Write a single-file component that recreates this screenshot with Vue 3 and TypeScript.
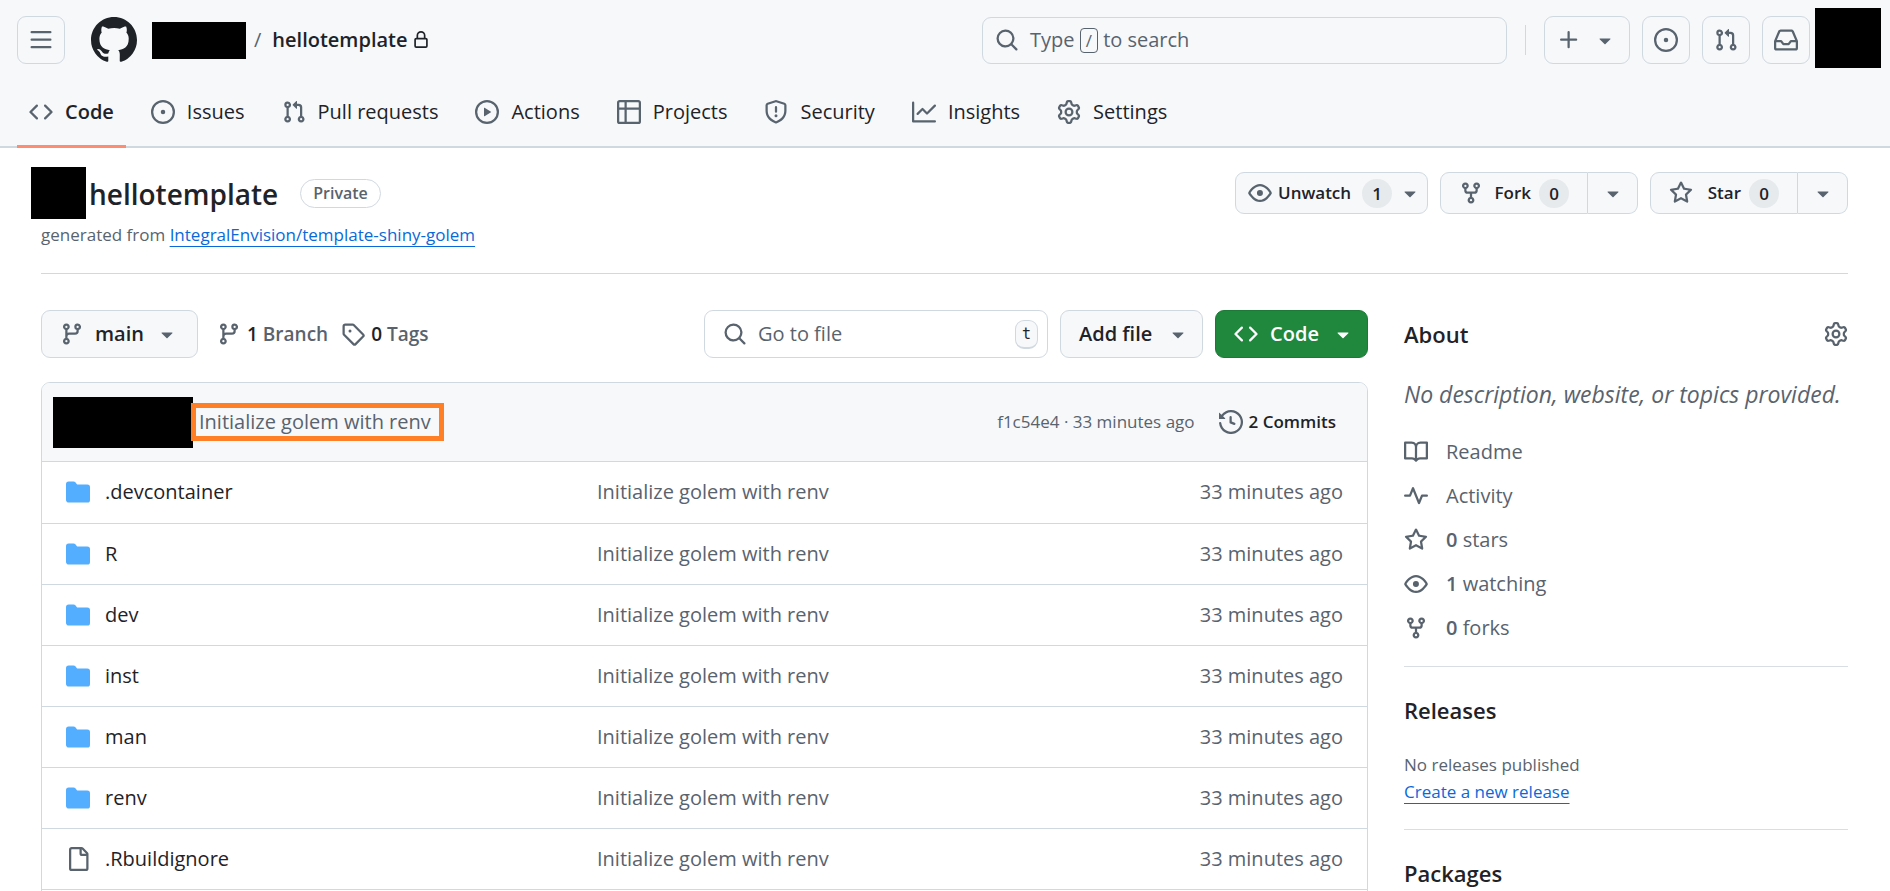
<script setup lang="ts">
import { ref } from 'vue'

const icons = {
  bars: 'M1 2.75A.75.75 0 0 1 1.75 2h12.5a.75.75 0 0 1 0 1.5H1.75A.75.75 0 0 1 1 2.75Zm0 5A.75.75 0 0 1 1.75 7h12.5a.75.75 0 0 1 0 1.5H1.75A.75.75 0 0 1 1 7.75ZM1.75 12h12.5a.75.75 0 0 1 0 1.5H1.75a.75.75 0 0 1 0-1.5Z',
  mark: 'M8 0c4.42 0 8 3.58 8 8a8.013 8.013 0 0 1-5.45 7.59c-.4.08-.55-.17-.55-.38 0-.27.01-1.13.01-2.2 0-.75-.25-1.23-.54-1.48 1.78-.2 3.65-.88 3.65-3.95 0-.88-.31-1.59-.82-2.15.08-.2.36-1.02-.08-2.12 0 0-.67-.22-2.2.82-.64-.18-1.32-.27-2-.27-.68 0-1.36.09-2 .27-1.53-1.03-2.2-.82-2.2-.82-.44 1.1-.16 1.92-.08 2.12-.51.56-.82 1.28-.82 2.15 0 3.06 1.86 3.75 3.64 3.95-.23.2-.44.55-.51 1.07-.46.21-1.61.55-2.33-.66-.15-.24-.6-.83-1.23-.82-.67.01-.27.38.01.53.34.19.73.9.82 1.13.16.45.68 1.31 2.69.94 0 .67.01 1.3.01 1.49 0 .21-.15.45-.55.38A7.995 7.995 0 0 1 0 8c0-4.42 3.58-8 8-8Z',
  lock: 'M4 4a4 4 0 0 1 8 0v2h.25c.966 0 1.75.784 1.75 1.75v5.5A1.75 1.75 0 0 1 12.25 15h-8.5A1.75 1.75 0 0 1 2 13.25v-5.5C2 6.784 2.784 6 3.75 6H4Zm8.25 3.5h-8.5a.25.25 0 0 0-.25.25v5.5c0 .138.112.25.25.25h8.5a.25.25 0 0 0 .25-.25v-5.5a.25.25 0 0 0-.25-.25ZM10.5 6V4a2.5 2.5 0 1 0-5 0v2Z',
  search: 'M10.68 11.74a6 6 0 0 1-7.922-8.982 6 6 0 0 1 8.982 7.922l3.04 3.04a.749.749 0 0 1-.326 1.275.749.749 0 0 1-.734-.215ZM11.5 7a4.499 4.499 0 1 0-8.997 0A4.499 4.499 0 0 0 11.5 7Z',
  plus: 'M7.75 2a.75.75 0 0 1 .75.75V7h4.25a.75.75 0 0 1 0 1.5H8.5v4.25a.75.75 0 0 1-1.5 0V8.5H2.75a.75.75 0 0 1 0-1.5H7V2.75A.75.75 0 0 1 7.75 2Z',
  caret: 'm4.427 7.427 3.396 3.396a.25.25 0 0 0 .354 0l3.396-3.396A.25.25 0 0 0 11.396 7H4.604a.25.25 0 0 0-.177.427Z',
  inbox: 'M2.8 2.06A1.75 1.75 0 0 1 4.41 1h7.18c.7 0 1.333.417 1.61 1.06l2.74 6.395c.04.093.06.194.06.295v4.5A1.75 1.75 0 0 1 14.25 15H1.75A1.75 1.75 0 0 1 0 13.25v-4.5c0-.101.02-.202.06-.295Zm1.61.44a.25.25 0 0 0-.23.152L1.887 8H4.75a.75.75 0 0 1 .6.3L6.625 10h2.75l1.275-1.7a.75.75 0 0 1 .6-.3h2.863L11.82 2.652a.25.25 0 0 0-.23-.152Zm10.09 7h-2.875l-1.275 1.7a.75.75 0 0 1-.6.3h-3.5a.75.75 0 0 1-.6-.3L4.375 9.5H1.5v3.75c0 .138.112.25.25.25h12.5a.25.25 0 0 0 .25-.25Z',
  code: 'm11.28 3.22 4.25 4.25a.75.75 0 0 1 0 1.06l-4.25 4.25a.749.749 0 0 1-1.275-.326.749.749 0 0 1 .215-.734L13.94 8l-3.72-3.72a.749.749 0 0 1 .326-1.275.749.749 0 0 1 .734.215Zm-6.56 0a.751.751 0 0 1 1.042.018.751.751 0 0 1 .018 1.042L2.06 8l3.72 3.72a.749.749 0 0 1-.326 1.275.749.749 0 0 1-.734-.215L.47 8.53a.75.75 0 0 1 0-1.06Z',
  issue: 'M8 9.5a1.5 1.5 0 1 0 0-3 1.5 1.5 0 0 0 0 3ZM8 0a8 8 0 1 1 0 16A8 8 0 0 1 8 0ZM1.5 8a6.5 6.5 0 1 0 13 0 6.5 6.5 0 0 0-13 0Z',
  pull: 'M1.5 3.25a2.25 2.25 0 1 1 3 2.122v5.256a2.251 2.251 0 1 1-1.5 0V5.372A2.25 2.25 0 0 1 1.5 3.25Zm5.677-.177L9.573.677A.25.25 0 0 1 10 .854V2.5h1A2.5 2.5 0 0 1 13.5 5v5.628a2.251 2.251 0 1 1-1.5 0V5a1 1 0 0 0-1-1h-1v1.646a.25.25 0 0 1-.427.177L7.177 3.427a.25.25 0 0 1 0-.354ZM3.75 2.5a.75.75 0 1 0 0 1.5.75.75 0 0 0 0-1.5Zm0 9.5a.75.75 0 1 0 0 1.5.75.75 0 0 0 0-1.5Zm8.25.75a.75.75 0 1 0 1.5 0 .75.75 0 0 0-1.5 0Z',
  play: 'M8 0a8 8 0 1 1 0 16A8 8 0 0 1 8 0ZM1.5 8a6.5 6.5 0 1 0 13 0 6.5 6.5 0 0 0-13 0Zm4.879-2.773 4.264 2.559a.25.25 0 0 1 0 .428l-4.264 2.559A.25.25 0 0 1 6 10.559V5.442a.25.25 0 0 1 .379-.215Z',
  table: 'M0 1.75C0 .784.784 0 1.75 0h12.5C15.216 0 16 .784 16 1.75v12.5A1.75 1.75 0 0 1 14.25 16H1.75A1.75 1.75 0 0 1 0 14.25ZM6.5 6.5v8h7.75a.25.25 0 0 0 .25-.25V6.5Zm8-1.5V1.75a.25.25 0 0 0-.25-.25H6.5V5Zm-13 1.5v7.75c0 .138.112.25.25.25H5v-8ZM5 5V1.5H1.75a.25.25 0 0 0-.25.25V5Z',
  shield: 'M7.467.133a1.748 1.748 0 0 1 1.066 0l5.25 1.68A1.75 1.75 0 0 1 15 3.48V7c0 1.566-.32 3.182-1.303 4.682-.983 1.498-2.585 2.813-5.032 3.855a1.697 1.697 0 0 1-1.33 0c-2.447-1.042-4.049-2.357-5.032-3.855C1.32 10.182 1 8.566 1 7V3.48a1.75 1.75 0 0 1 1.217-1.667Zm.61 1.429a.25.25 0 0 0-.153 0l-5.25 1.68a.25.25 0 0 0-.174.238V7c0 1.358.275 2.666 1.057 3.86.784 1.194 2.121 2.34 4.366 3.297a.196.196 0 0 0 .154 0c2.245-.956 3.582-2.104 4.366-3.298C13.225 9.666 13.5 8.36 13.5 7V3.48a.251.251 0 0 0-.174-.237l-5.25-1.68ZM8.75 4.75v3a.75.75 0 0 1-1.5 0v-3a.75.75 0 0 1 1.5 0ZM9 10.5a1 1 0 1 1-2 0 1 1 0 0 1 2 0Z',
  graph: 'M1.5 1.75V13.5h13.75a.75.75 0 0 1 0 1.5H.75a.75.75 0 0 1-.75-.75V1.75a.75.75 0 0 1 1.5 0Zm14.28 2.53-5.25 5.25a.75.75 0 0 1-1.06 0L7 7.06 4.28 9.78a.751.751 0 0 1-1.042-.018.751.751 0 0 1-.018-1.042l3.25-3.25a.75.75 0 0 1 1.06 0L10 7.94l4.72-4.72a.751.751 0 0 1 1.042.018.751.751 0 0 1 .018 1.042Z',
  gear: 'M8 0a8.2 8.2 0 0 1 .701.031C9.444.095 9.99.645 10.16 1.29l.288 1.107c.018.066.079.158.212.224.231.114.454.243.668.386.123.082.233.09.299.071l1.103-.303c.644-.176 1.392.021 1.82.63.27.385.506.792.704 1.218.315.675.111 1.422-.364 1.891l-.814.806c-.049.048-.098.147-.088.294.016.257.016.515 0 .772-.01.147.038.246.088.294l.814.806c.475.469.679 1.216.364 1.891a7.977 7.977 0 0 1-.704 1.217c-.428.61-1.176.807-1.82.63l-1.102-.302c-.067-.019-.177-.011-.3.071a5.909 5.909 0 0 1-.668.386c-.133.066-.194.158-.211.224l-.29 1.106c-.168.646-.715 1.196-1.458 1.26a8.006 8.006 0 0 1-1.402 0c-.743-.064-1.289-.614-1.458-1.26l-.289-1.106c-.018-.066-.079-.158-.212-.224a5.738 5.738 0 0 1-.668-.386c-.123-.082-.233-.09-.299-.071l-1.103.303c-.644.176-1.392-.021-1.82-.63a8.12 8.12 0 0 1-.704-1.218c-.315-.675-.111-1.422.363-1.891l.815-.806c.05-.048.098-.147.088-.294a6.214 6.214 0 0 1 0-.772c.01-.147-.038-.246-.088-.294l-.815-.806C.635 6.045.431 5.298.746 4.623a7.92 7.92 0 0 1 .704-1.217c.428-.61 1.176-.807 1.82-.63l1.102.302c.067.019.177.011.3-.071.214-.143.437-.272.668-.386.133-.066.194-.158.211-.224l.29-1.106C6.009.645 6.556.095 7.299.03 7.53.01 7.764 0 8 0Zm-.571 1.525c-.036.003-.108.036-.137.146l-.289 1.105c-.147.561-.549.967-.998 1.189-.173.086-.34.183-.5.29-.417.278-.97.423-1.529.27l-1.103-.303c-.109-.03-.175.016-.195.045-.22.312-.412.644-.573.99-.014.031-.021.11.059.19l.815.806c.411.406.562.957.53 1.456a4.709 4.709 0 0 0 0 .582c.032.499-.119 1.05-.53 1.456l-.815.806c-.081.08-.073.159-.059.19.162.346.353.677.573.989.02.03.085.076.195.046l1.102-.303c.56-.153 1.113-.008 1.53.27.161.107.328.204.501.29.447.222.85.629.997 1.189l.289 1.105c.029.109.101.143.137.146a6.6 6.6 0 0 0 1.142 0c.036-.003.108-.036.137-.146l.289-1.105c.147-.561.549-.967.998-1.189.173-.086.34-.183.5-.29.417-.278.97-.423 1.529-.27l1.103.303c.109.029.175-.016.195-.045.22-.313.411-.644.573-.99.014-.031.021-.11-.059-.19l-.815-.806c-.411-.406-.562-.957-.53-1.456a4.709 4.709 0 0 0 0-.582c-.032-.499.119-1.05.53-1.456l.815-.806c.081-.08.073-.159.059-.19a6.464 6.464 0 0 0-.573-.989c-.02-.03-.085-.076-.195-.046l-1.102.303c-.56.153-1.113.008-1.53-.27a4.44 4.44 0 0 0-.501-.29c-.447-.222-.85-.629-.997-1.189l-.289-1.105c-.029-.11-.101-.143-.137-.146a6.6 6.6 0 0 0-1.142 0ZM11 8a3 3 0 1 1-6 0 3 3 0 0 1 6 0ZM9.5 8a1.5 1.5 0 1 0-3.001.001A1.5 1.5 0 0 0 9.5 8Z',
  eye: 'M8 2c1.981 0 3.671.992 4.933 2.078 1.27 1.091 2.187 2.345 2.637 3.023a1.62 1.62 0 0 1 0 1.798c-.45.678-1.367 1.932-2.637 3.023C11.67 13.008 9.981 14 8 14c-1.981 0-3.671-.992-4.933-2.078C1.797 10.83.88 9.576.43 8.898a1.62 1.62 0 0 1 0-1.798c.45-.677 1.367-1.931 2.637-3.022C4.33 2.992 6.019 2 8 2ZM1.679 7.932a.12.12 0 0 0 0 .136c.411.622 1.241 1.75 2.366 2.717C5.176 11.758 6.527 12.5 8 12.5c1.473 0 2.825-.742 3.955-1.715 1.124-.967 1.954-2.096 2.366-2.717a.12.12 0 0 0 0-.136c-.412-.621-1.242-1.75-2.366-2.717C10.824 4.242 9.473 3.5 8 3.5c-1.473 0-2.825.742-3.955 1.715-1.124.967-1.954 2.096-2.366 2.717ZM8 10a2 2 0 1 1-.001-3.999A2 2 0 0 1 8 10Z',
  fork: 'M5 5.372v.878c0 .414.336.75.75.75h4.5a.75.75 0 0 0 .75-.75v-.878a2.25 2.25 0 1 1 1.5 0v.878a2.25 2.25 0 0 1-2.25 2.25h-1.5v2.128a2.251 2.251 0 1 1-1.5 0V8.5h-1.5A2.25 2.25 0 0 1 3.5 6.25v-.878a2.25 2.25 0 1 1 1.5 0ZM5 3.25a.75.75 0 1 0-1.5 0 .75.75 0 0 0 1.5 0Zm6.75.75a.75.75 0 1 0 0-1.5.75.75 0 0 0 0 1.5Zm-3 8.75a.75.75 0 1 0-1.5 0 .75.75 0 0 0 1.5 0Z',
  star: 'M8 .25a.75.75 0 0 1 .673.418l1.882 3.815 4.21.612a.75.75 0 0 1 .416 1.279l-3.046 2.97.719 4.192a.751.751 0 0 1-1.088.791L8 12.347l-3.766 1.98a.75.75 0 0 1-1.088-.79l.72-4.194L.818 6.374a.75.75 0 0 1 .416-1.28l4.21-.611L7.327.668A.75.75 0 0 1 8 .25Zm0 2.445L6.615 5.5a.75.75 0 0 1-.564.41l-3.097.45 2.24 2.184a.75.75 0 0 1 .216.664l-.528 3.084 2.769-1.456a.75.75 0 0 1 .698 0l2.77 1.456-.53-3.084a.75.75 0 0 1 .216-.664l2.24-2.183-3.096-.45a.75.75 0 0 1-.564-.41L8 2.694Z',
  branch: 'M9.5 3.25a2.25 2.25 0 1 1 3 2.122V6A2.5 2.5 0 0 1 10 8.5H6a1 1 0 0 0-1 1v1.128a2.251 2.251 0 1 1-1.5 0V5.372a2.25 2.25 0 1 1 1.5 0v1.836A2.493 2.493 0 0 1 6 7h4a1 1 0 0 0 1-1v-.628A2.25 2.25 0 0 1 9.5 3.25Zm-6 0a.75.75 0 1 0 1.5 0 .75.75 0 0 0-1.5 0Zm8.25-.75a.75.75 0 1 0 0 1.5.75.75 0 0 0 0-1.5ZM4.25 12a.75.75 0 1 0 0 1.5.75.75 0 0 0 0-1.5Z',
  tag: 'M1 7.775V2.75C1 1.784 1.784 1 2.75 1h5.025c.464 0 .91.184 1.238.513l6.25 6.25a1.75 1.75 0 0 1 0 2.474l-5.026 5.026a1.75 1.75 0 0 1-2.474 0l-6.25-6.25A1.752 1.752 0 0 1 1 7.775Zm1.5 0c0 .066.026.13.073.177l6.25 6.25a.25.25 0 0 0 .354 0l5.025-5.025a.25.25 0 0 0 0-.354l-6.25-6.25a.25.25 0 0 0-.177-.073H2.75a.25.25 0 0 0-.25.25ZM6 5a1 1 0 1 1 0 2 1 1 0 0 1 0-2Z',
  history: 'm.427 1.927 1.215 1.215a8.002 8.002 0 1 1-1.6 5.685.75.75 0 1 1 1.493-.154 6.5 6.5 0 1 0 1.18-4.458l1.358 1.358A.25.25 0 0 1 3.896 6H.25A.25.25 0 0 1 0 5.75V2.104a.25.25 0 0 1 .427-.177ZM7.75 4a.75.75 0 0 1 .75.75v2.992l2.028.812a.75.75 0 0 1-.557 1.392l-2.5-1A.751.751 0 0 1 7 8.25v-3.5A.75.75 0 0 1 7.75 4Z',
  folder: 'M1.75 1A1.75 1.75 0 0 0 0 2.75v10.5C0 14.216.784 15 1.75 15h12.5A1.75 1.75 0 0 0 16 13.25v-8.5A1.75 1.75 0 0 0 14.25 3H7.5a.25.25 0 0 1-.2-.1l-.9-1.2C6.07 1.26 5.55 1 5 1H1.75Z',
  file: 'M2 1.75C2 .784 2.784 0 3.75 0h6.586c.464 0 .909.184 1.237.513l2.914 2.914c.329.328.513.773.513 1.237v9.586A1.75 1.75 0 0 1 13.25 16h-9.5A1.75 1.75 0 0 1 2 14.25Zm1.75-.25a.25.25 0 0 0-.25.25v12.5c0 .138.112.25.25.25h9.5a.25.25 0 0 0 .25-.25V6h-2.75A1.75 1.75 0 0 1 9 4.25V1.5Zm6.75.062V4.25c0 .138.112.25.25.25h2.688l-.011-.013-2.914-2.914-.013-.011Z',
  book: 'M0 1.75A.75.75 0 0 1 .75 1h4.253c1.227 0 2.317.59 3 1.501A3.743 3.743 0 0 1 11.006 1h4.245a.75.75 0 0 1 .75.75v10.5a.75.75 0 0 1-.75.75h-4.507a2.25 2.25 0 0 0-1.591.659l-.622.621a.75.75 0 0 1-1.06 0l-.622-.621A2.25 2.25 0 0 0 5.258 13H.75a.75.75 0 0 1-.75-.75Zm7.251 10.324.004-5.073-.002-2.253A2.25 2.25 0 0 0 5.003 2.5H1.5v9h3.757a3.75 3.75 0 0 1 1.994.574ZM8.755 4.75l-.004 7.322a3.752 3.752 0 0 1 1.992-.572H14.5v-9h-3.495a2.25 2.25 0 0 0-2.25 2.25Z',
  pulse: 'M6 2c.306 0 .582.187.696.471L10 10.731l1.304-3.26A.751.751 0 0 1 12 7h3.25a.75.75 0 0 1 0 1.5h-2.742l-1.812 4.528a.751.751 0 0 1-1.392 0L6 4.77 4.696 8.03A.75.75 0 0 1 4 8.5H.75a.75.75 0 0 1 0-1.5h2.742l1.812-4.529A.751.751 0 0 1 6 2Z',
}

type IconName = keyof typeof icons

const tabs: { label: string; icon: IconName }[] = [
  { label: 'Code', icon: 'code' },
  { label: 'Issues', icon: 'issue' },
  { label: 'Pull requests', icon: 'pull' },
  { label: 'Actions', icon: 'play' },
  { label: 'Projects', icon: 'table' },
  { label: 'Security', icon: 'shield' },
  { label: 'Insights', icon: 'graph' },
  { label: 'Settings', icon: 'gear' },
]

const shortcuts: { label: string; icon: IconName }[] = [
  { label: 'Issues', icon: 'issue' },
  { label: 'Pull requests', icon: 'pull' },
  { label: 'Notifications', icon: 'inbox' },
]

const files: { name: string; icon: IconName }[] = [
  { name: '.devcontainer', icon: 'folder' },
  { name: 'R', icon: 'folder' },
  { name: 'dev', icon: 'folder' },
  { name: 'inst', icon: 'folder' },
  { name: 'man', icon: 'folder' },
  { name: 'renv', icon: 'folder' },
  { name: '.Rbuildignore', icon: 'file' },
]

const facts: { icon: IconName; count?: number; label: string }[] = [
  { icon: 'book', label: 'Readme' },
  { icon: 'pulse', label: 'Activity' },
  { icon: 'star', count: 0, label: 'stars' },
  { icon: 'eye', count: 1, label: 'watching' },
  { icon: 'fork', count: 0, label: 'forks' },
]

const commitMessage = 'Initialize golem with renv'
const commitAge = '33 minutes ago'
const activeTab = ref('Code')
const fileQuery = ref('')
</script>

<template>
  <div class="page">
    <header class="header">
      <div class="topbar">
        <button class="square" type="button" aria-label="Open menu">
          <svg class="icon" viewBox="0 0 16 16"><path :d="icons.bars" /></svg>
        </button>
        <a class="logo" href="#" aria-label="Homepage">
          <svg class="mark" viewBox="0 0 16 16"><path :d="icons.mark" /></svg>
        </a>
        <div class="crumbs">
          <span class="redacted owner"></span>
          <span class="slash">/</span>
          <a class="repo" href="#">hellotemplate</a>
          <svg class="lock" viewBox="0 0 16 16"><path :d="icons.lock" /></svg>
        </div>
        <div class="tools">
          <button class="search" type="button">
            <svg class="icon" viewBox="0 0 16 16"><path :d="icons.search" /></svg>
            <span>Type <kbd class="slash-key">/</kbd> to search</span>
          </button>
          <span class="divider"></span>
          <button class="square create" type="button" aria-label="Create new">
            <svg class="icon" viewBox="0 0 16 16"><path :d="icons.plus" /></svg>
            <svg class="icon" viewBox="0 0 16 16"><path :d="icons.caret" /></svg>
          </button>
          <button v-for="s in shortcuts" :key="s.label" class="square" type="button" :aria-label="s.label">
            <svg class="icon" viewBox="0 0 16 16"><path :d="icons[s.icon]" /></svg>
          </button>
        </div>
        <span class="redacted avatar"></span>
      </div>
      <nav class="tabs" aria-label="Repository">
        <a
          v-for="tab in tabs"
          :key="tab.label"
          href="#"
          class="tab"
          :class="{ active: tab.label === activeTab }"
          @click.prevent="activeTab = tab.label"
        >
          <svg class="icon" viewBox="0 0 16 16"><path :d="icons[tab.icon]" /></svg>
          <span>{{ tab.label }}</span>
        </a>
      </nav>
    </header>

    <section class="title-row">
      <div class="title-block">
        <div class="title-line">
          <span class="redacted title-owner"></span>
          <h1 class="title">hellotemplate</h1>
          <span class="pill">Private</span>
        </div>
        <p class="origin">generated from <a class="link" href="#">IntegralEnvision/template-shiny-golem</a></p>
      </div>
      <div class="actions">
        <button class="btn small watch" type="button">
          <svg class="icon" viewBox="0 0 16 16"><path :d="icons.eye" /></svg>
          <span>Unwatch</span>
          <span class="counter">1</span>
          <svg class="icon" viewBox="0 0 16 16"><path :d="icons.caret" /></svg>
        </button>
        <div class="split">
          <button class="btn small main-part" type="button">
            <svg class="icon" viewBox="0 0 16 16"><path :d="icons.fork" /></svg>
            <span>Fork</span>
            <span class="counter">0</span>
          </button>
          <button class="btn small drop-part" type="button" aria-label="Existing forks">
            <svg class="icon" viewBox="0 0 16 16"><path :d="icons.caret" /></svg>
          </button>
        </div>
        <div class="split">
          <button class="btn small main-part" type="button">
            <svg class="icon" viewBox="0 0 16 16"><path :d="icons.star" /></svg>
            <span>Star</span>
            <span class="counter">0</span>
          </button>
          <button class="btn small drop-part" type="button" aria-label="Add to a list">
            <svg class="icon" viewBox="0 0 16 16"><path :d="icons.caret" /></svg>
          </button>
        </div>
      </div>
    </section>

    <div class="layout">
      <main class="content">
        <div class="toolbar">
          <button class="btn branch" type="button">
            <svg class="icon" viewBox="0 0 16 16"><path :d="icons.branch" /></svg>
            <span>main</span>
            <svg class="icon" viewBox="0 0 16 16"><path :d="icons.caret" /></svg>
          </button>
          <div class="refs">
            <a class="ref" href="#">
              <svg class="icon" viewBox="0 0 16 16"><path :d="icons.branch" /></svg>
              <span><strong>1</strong> Branch</span>
            </a>
            <a class="ref" href="#">
              <svg class="icon" viewBox="0 0 16 16"><path :d="icons.tag" /></svg>
              <span><strong>0</strong> Tags</span>
            </a>
          </div>
          <label class="file-search">
            <svg class="icon" viewBox="0 0 16 16"><path :d="icons.search" /></svg>
            <input v-model="fileQuery" type="text" placeholder="Go to file" aria-label="Go to file" />
            <kbd class="key">t</kbd>
          </label>
          <button class="btn add" type="button">
            <span>Add file</span>
            <svg class="icon" viewBox="0 0 16 16"><path :d="icons.caret" /></svg>
          </button>
          <button class="btn primary" type="button">
            <svg class="icon" viewBox="0 0 16 16"><path :d="icons.code" /></svg>
            <span>Code</span>
            <svg class="icon" viewBox="0 0 16 16"><path :d="icons.caret" /></svg>
          </button>
        </div>

        <div class="box">
          <div class="commit">
            <span class="redacted author"></span>
            <a class="message marked" href="#">{{ commitMessage }}</a>
            <span class="sha"><a href="#">f1c54e4</a> · {{ commitAge }}</span>
            <a class="commits" href="#">
              <svg class="icon" viewBox="0 0 16 16"><path :d="icons.history" /></svg>
              <span>2 Commits</span>
            </a>
          </div>
          <table class="files" aria-label="Folders and files">
            <tbody>
              <tr v-for="file in files" :key="file.name">
                <td class="name">
                  <div class="entry">
                    <svg class="icon" :class="file.icon" viewBox="0 0 16 16"><path :d="icons[file.icon]" /></svg>
                    <a href="#">{{ file.name }}</a>
                  </div>
                </td>
                <td class="note"><a href="#">{{ commitMessage }}</a></td>
                <td class="age">{{ commitAge }}</td>
              </tr>
            </tbody>
          </table>
        </div>
      </main>

      <aside class="side">
        <section class="panel">
          <div class="panel-head">
            <h2>About</h2>
            <button class="plain" type="button" aria-label="Edit details">
              <svg class="icon" viewBox="0 0 16 16"><path :d="icons.gear" /></svg>
            </button>
          </div>
          <p class="blank">No description, website, or topics provided.</p>
          <ul class="facts">
            <li v-for="fact in facts" :key="fact.label">
              <a href="#">
                <svg class="icon" viewBox="0 0 16 16"><path :d="icons[fact.icon]" /></svg>
                <span><strong v-if="fact.count !== undefined">{{ fact.count }}</strong> {{ fact.label }}</span>
              </a>
            </li>
          </ul>
        </section>
        <section class="panel">
          <h2>Releases</h2>
          <p class="line">No releases published</p>
          <p class="line"><a class="link" href="#">Create a new release</a></p>
        </section>
        <section class="panel">
          <h2>Packages</h2>
        </section>
      </aside>
    </div>
  </div>
</template>

<style>
body {
  margin: 0;
  background: #ffffff;
}
</style>

<style scoped>
.page {
  height: 100vh;
  overflow: hidden;
  color: #1f2328;
  background: #ffffff;
  font-family: "Open Sans", "Noto Sans", sans-serif;
  font-size: 20px;
  line-height: 28px;
}
.page * {
  box-sizing: border-box;
}
a {
  color: inherit;
  text-decoration: none;
}
button,
input {
  font: inherit;
  color: inherit;
}
h1,
h2,
p,
ul {
  margin: 0;
  padding: 0;
}
.icon {
  width: 24px;
  height: 24px;
  flex: none;
  fill: #59636e;
}
.redacted {
  flex: none;
  background: #000000;
}

.header {
  background: #f6f8fa;
  border-bottom: 2px solid #d1d9e0;
}
.topbar {
  display: flex;
  align-items: center;
  height: 80px;
  padding: 0 9px 0 17px;
}
.square {
  display: flex;
  align-items: center;
  justify-content: center;
  width: 48px;
  height: 48px;
  padding: 0;
  border: 1px solid #d1d9e0;
  border-radius: 9px;
  background: transparent;
}
.logo {
  display: flex;
  margin: 0 15px 0 26px;
}
.mark {
  width: 46px;
  height: 46px;
  fill: #1f2328;
}
.crumbs {
  display: flex;
  align-items: center;
}
.owner {
  width: 94px;
  height: 37px;
}
.slash {
  padding: 0 11px 0 8px;
  color: #59636e;
}
.repo {
  font-weight: 600;
}
.lock {
  width: 18px;
  height: 18px;
  margin-left: 4px;
  fill: #1f2328;
}
.tools {
  display: flex;
  align-items: center;
  gap: 12px;
  margin-left: auto;
}
.search {
  display: flex;
  align-items: center;
  gap: 11px;
  width: 525px;
  height: 47px;
  padding: 0 12px;
  border: 1px solid #d1d9e0;
  border-radius: 9px;
  background: transparent;
  color: #59636e;
}
.slash-key {
  padding: 0 5px;
  border: 1px solid #59636e;
  border-radius: 4px;
  font: inherit;
  font-size: 17px;
}
.divider {
  width: 1px;
  height: 30px;
  margin: 0 6px;
  background: #d1d9e0;
}
.create {
  width: 86px;
  gap: 12px;
}
.avatar {
  align-self: flex-start;
  width: 66px;
  height: 60px;
  margin: 8px 0 0 5px;
}
.tabs {
  display: flex;
  gap: 13px;
  padding: 0 17px;
  margin-bottom: -2px;
}
.tab {
  display: flex;
  align-items: center;
  gap: 12px;
  height: 68px;
  padding: 0 12px 2px;
  border-bottom: 3px solid transparent;
}
.tab.active {
  border-bottom-color: #fd8c73;
  font-weight: 600;
}

.title-row {
  display: flex;
  justify-content: space-between;
  margin: 0 42px 0 41px;
  padding: 19px 0 26px;
  border-bottom: 1px solid #d1d9e0;
}
.title-line {
  display: flex;
  align-items: center;
  margin-left: -10px;
}
.title-owner {
  width: 55px;
  height: 52px;
}
.title {
  margin: 0 22px 0 3px;
  padding-top: 2px;
  font-size: 28px;
  line-height: 40px;
  font-weight: 600;
}
.pill {
  padding: 0 12px;
  border: 1px solid #d1d9e0;
  border-radius: 15px;
  color: #59636e;
  font-size: 16px;
  line-height: 27px;
  font-weight: 600;
}
.origin {
  padding-top: 4px;
  color: #59636e;
  font-size: 17px;
  line-height: 24px;
}
.link {
  color: #0969da;
  text-decoration: underline;
  text-decoration-thickness: 1px;
  text-underline-offset: 5px;
}
.actions {
  display: flex;
  align-items: flex-start;
  gap: 12px;
  padding-top: 5px;
}
.btn {
  display: flex;
  align-items: center;
  height: 48px;
  padding: 0 18px;
  border: 1px solid #d1d9e0;
  border-radius: 9px;
  background: #f6f8fa;
  font-size: 20px;
  font-weight: 600;
  white-space: nowrap;
}
.btn.small {
  height: 42px;
  font-size: 17px;
}
.btn.watch {
  gap: 6px;
  width: 193px;
  padding: 0 5px 0 12px;
}
.watch .counter {
  margin-left: auto;
}
.counter {
  min-width: 30px;
  border-radius: 15px;
  background: #e7eaed;
  font-size: 17px;
  line-height: 29px;
  text-align: center;
}
.split {
  display: flex;
}
.main-part {
  gap: 8px;
  width: 148px;
  padding: 0 18px;
  border-radius: 9px 0 0 9px;
}
.main-part .icon {
  margin-right: auto;
}
.drop-part {
  width: 50px;
  justify-content: center;
  padding: 0;
  border-left: 0;
  border-radius: 0 9px 9px 0;
}

.layout {
  display: flex;
  gap: 36px;
  margin: 36px 42px 0 41px;
}
.content {
  flex: 1;
  min-width: 0;
}
.toolbar {
  display: flex;
  align-items: center;
  gap: 12px;
}
.branch {
  width: 157px;
  justify-content: space-between;
}
.refs {
  display: flex;
  gap: 13px;
  margin: 0 auto 0 7px;
}
.ref {
  display: flex;
  align-items: center;
  gap: 6px;
  color: #59636e;
  font-size: 19px;
  font-weight: 600;
}
.ref strong {
  color: #1f2328;
  font-weight: 600;
}
.file-search {
  display: flex;
  align-items: center;
  gap: 11px;
  width: 344px;
  height: 48px;
  padding: 0 9px 0 18px;
  border: 1px solid #d1d9e0;
  border-radius: 9px;
}
.file-search input {
  flex: 1;
  min-width: 0;
  padding: 0;
  border: 0;
  outline: 0;
  background: transparent;
}
.file-search input::placeholder {
  color: #59636e;
  opacity: 1;
}
.key {
  width: 23px;
  border: 1px solid #d1d9e0;
  border-bottom-width: 2px;
  border-radius: 9px;
  background: #f6f8fa;
  font-family: "DejaVu Sans Mono", monospace;
  font-size: 15px;
  line-height: 26px;
  text-align: center;
}
.add {
  width: 143px;
  padding-right: 12px;
  justify-content: space-between;
}
.primary {
  width: 153px;
  padding-right: 12px;
  justify-content: space-between;
  border-color: #1c7a36;
  background: #1f883d;
  color: #ffffff;
}
.primary .icon {
  fill: #ffffff;
}

.box {
  margin-top: 24px;
  padding-bottom: 24px;
  border: 1px solid #d1d9e0;
  border-radius: 9px;
}
.commit {
  display: flex;
  align-items: center;
  height: 79px;
  padding: 0 31px 0 11px;
  border-bottom: 1px solid #d1d9e0;
  border-radius: 8px 8px 0 0;
  background: #f6f8fa;
}
.author {
  width: 140px;
  height: 51px;
}
.message {
  color: #59636e;
}
.marked {
  margin-left: -2px;
  padding: 0 8px 0 3px;
  border: 5px solid #ff7f27;
}
.sha {
  margin-left: auto;
  color: #59636e;
  font-size: 17px;
}
.commits {
  display: flex;
  align-items: center;
  gap: 6px;
  margin-left: 24px;
  font-size: 17px;
  font-weight: 600;
}
.files {
  width: 100%;
  border-collapse: collapse;
  table-layout: fixed;
}
.files td {
  height: 61px;
  padding: 0;
  border-bottom: 1px solid #d1d9e0;
}
.files .name {
  width: 555px;
  padding-left: 24px;
}
.entry {
  display: flex;
  align-items: center;
  gap: 15px;
}
.icon.folder {
  fill: #54aeff;
}
.note {
  color: #59636e;
}
.files .age {
  padding-right: 24px;
  color: #59636e;
  text-align: right;
}

.side {
  width: 444px;
  flex: none;
  color: #59636e;
}
.panel + .panel {
  margin-top: 24px;
  padding-top: 28px;
  border-top: 1px solid #d8dee4;
}
.panel-head {
  display: flex;
  align-items: center;
  justify-content: space-between;
  height: 48px;
}
h2 {
  color: #1f2328;
  font-size: 22px;
  line-height: 30px;
  font-weight: 600;
}
.plain {
  display: flex;
  padding: 0;
  border: 0;
  background: transparent;
}
.blank {
  margin-top: 18px;
  font-size: 23px;
  line-height: 36px;
  font-style: italic;
  white-space: nowrap;
}
.facts {
  margin-top: 26px;
  list-style: none;
}
.facts li + li {
  margin-top: 16px;
}
.facts a {
  display: flex;
  align-items: center;
  gap: 18px;
}
.facts strong {
  font-weight: 600;
}
.line {
  font-size: 17px;
  line-height: 27px;
}
h2 + .line {
  margin-top: 26px;
}
</style>
